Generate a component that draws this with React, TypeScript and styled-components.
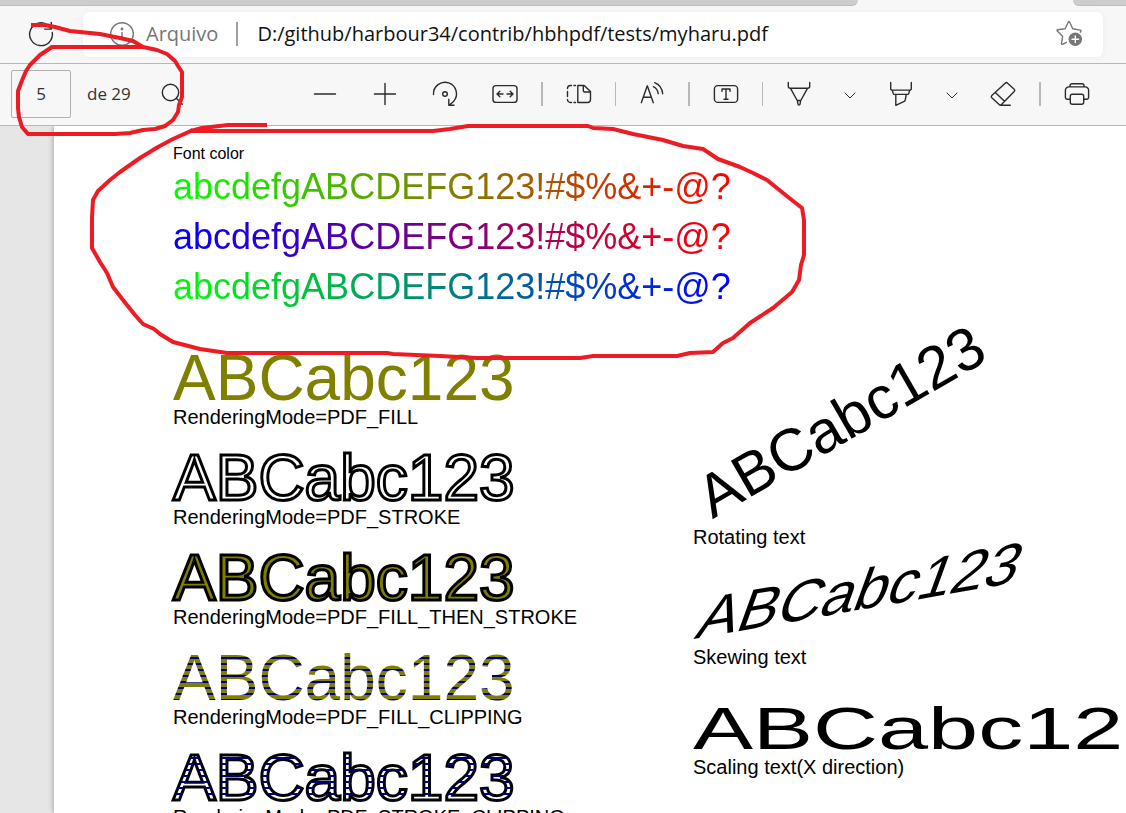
import React from "react";
import styled, { createGlobalStyle, css } from "styled-components";

const ui = `"Open Sans", "Noto Sans", sans-serif`;
const helvetica = `"Liberation Sans", Arial, sans-serif`;

const GlobalStyle = createGlobalStyle`
  *, *::before, *::after { box-sizing: border-box; }
  body { margin: 0; background: #e6e6e6; font-family: ${ui}; }
`;

const Window = styled.div`
  position: relative;
  display: flex;
  flex-direction: column;
  height: 100vh;
  overflow: hidden;
`;

/* ---------- browser chrome ---------- */

const TabStrip = styled.div`
  display: flex;
  height: 6px;
  flex: none;
  background: #f7f7f7;
`;

const TabEdge = styled.div<{ $side: "left" | "right" }>`
  background: #cdcdcd;
  border-bottom: 1px solid #bdbdbd;
  ${(p) =>
    p.$side === "left"
      ? css`
          flex: 1;
          border-bottom-right-radius: 6px;
          margin-right: 215px;
        `
      : css`
          width: 53px;
          border-bottom-left-radius: 6px;
        `}
`;

const AddressRow = styled.header`
  display: flex;
  align-items: center;
  flex: none;
  height: 58px;
  padding: 0 23px 1px 29px;
  gap: 30px;
  background: #f7f7f7;
  border-bottom: 1px solid #b8b8b8;
`;

const PlainButton = styled.button`
  display: flex;
  align-items: center;
  justify-content: center;
  padding: 0;
  border: 0;
  background: none;
  color: #2b2b2b;
`;

const FavoriteButton = styled(PlainButton)`
  color: #767676;
`;

const AddressBar = styled.div`
  display: flex;
  align-items: center;
  flex: 1;
  min-width: 0;
  height: 45px;
  padding: 0 19px 0 27px;
  border-radius: 6px;
  background: #fff;
  box-shadow: 0 0 6px rgba(0, 0, 0, 0.05);
  color: #767676;
`;

const Scheme = styled.span`
  margin-left: 12px;
  font-size: 20px;
  line-height: 28px;
`;

const SchemeRule = styled.span`
  width: 2px;
  height: 24px;
  margin: 0 19px 0 18px;
  background: #a0a0a0;
`;

const AddressInput = styled.input`
  flex: 1;
  min-width: 0;
  padding: 0;
  border: 0;
  outline: 0;
  background: none;
  color: #111;
  font-family: ${ui};
  font-size: 20px;
  line-height: 28px;
`;

/* ---------- PDF toolbar ---------- */

const Toolbar = styled.div`
  display: flex;
  align-items: center;
  flex: none;
  height: 62px;
  padding: 0 19px 2px 11px;
  background: #f7f7f7;
  border-bottom: 1px solid #b8b8b8;
`;

const PageField = styled.label`
  display: flex;
  align-items: center;
  gap: 16px;
  color: #333;
  font-size: 17px;
  line-height: 24px;
`;

const PageInput = styled.input`
  width: 60px;
  height: 48px;
  padding: 0;
  border: 1px solid #b0b0b0;
  border-radius: 2px;
  background: #f7f7f7;
  color: #333;
  text-align: center;
  font-family: ${ui};
  font-size: 17px;
`;

const SearchButton = styled(PlainButton)`
  margin-left: 29px;
`;

const Tools = styled.div`
  display: flex;
  align-items: center;
  margin-left: auto;
`;

const ToolButton = styled(PlainButton)<{ $narrow?: boolean }>`
  width: ${(p) => (p.$narrow ? 42 : 60)}px;
  height: 48px;
`;

const Divider = styled.span<{ $thin?: boolean }>`
  width: ${(p) => (p.$thin ? 1 : 2)}px;
  height: 24px;
  margin: 0 6px;
  background: #b8b8b8;
`;

const Stroke = styled.svg<{ $size?: number }>`
  display: block;
  width: ${(p) => p.$size ?? 24}px;
  height: ${(p) => p.$size ?? 24}px;
  overflow: visible;
  fill: none;
  stroke: currentColor;
  stroke-width: 1.4;
  stroke-linecap: round;
  stroke-linejoin: round;
`;

/* ---------- document ---------- */

const Viewer = styled.main`
  display: flex;
  flex: 1;
  min-height: 0;
  padding-left: 54px;
  overflow: hidden;
  background: #e6e6e6;
`;

const Sheet = styled.article`
  display: flex;
  flex: 1;
  min-width: 0;
  padding-left: 119px;
  background: #fff;
  box-shadow: 0 0 6px rgba(0, 0, 0, 0.35);
  color: #000;
  font-family: ${helvetica};
  font-kerning: none;
  white-space: nowrap;
`;

const ModesColumn = styled.section`
  flex: none;
  width: 520px;
  padding-top: 20px;
`;

const EffectsColumn = styled.section`
  flex: 1;
  min-width: 0;
  padding-top: 345px;
`;

const SmallCaption = styled.p`
  margin: 0;
  font-size: 16px;
  line-height: 16px;
`;

const ColorRow = styled.p<{ $from: string; $to: string }>`
  width: max-content;
  margin: 0;
  font-size: 36px;
  line-height: 50px;
  color: transparent;
  background: linear-gradient(to right, ${(p) => p.$from}, ${(p) => p.$to});
  background-clip: text;
  -webkit-background-clip: text;
`;

const Samples = styled.div`
  display: flex;
  flex-direction: column;
  gap: 22px;
  padding-top: 37px;
`;

const Figure = styled.figure`
  margin: 0;
`;

const Caption = styled.figcaption`
  font-size: 20px;
  line-height: 20px;
`;

const stripes = (base: string) =>
  `repeating-linear-gradient(to bottom, ${base} 0 2px, #000080 2px 4px, ${base} 4px 6px)`;

type Mode = "fill" | "stroke" | "fillStroke" | "fillClip" | "strokeClip";

const modeStyles = {
  fill: css`
    color: #808000;
  `,
  stroke: css`
    color: #fff;
    -webkit-text-stroke: 3px #000;
  `,
  fillStroke: css`
    color: #808000;
    -webkit-text-stroke: 3px #000;
  `,
  fillClip: css`
    color: transparent;
    background: ${stripes("#808000")};
    background-clip: text;
    -webkit-background-clip: text;
  `,
  strokeClip: css`
    position: relative;
    color: #fff;
    -webkit-text-stroke: 3px #000;
    &::after {
      content: attr(data-sample);
      position: absolute;
      inset: 0;
      color: transparent;
      -webkit-text-stroke: 0;
      background: ${stripes("transparent")};
      background-clip: text;
      -webkit-background-clip: text;
    }
  `,
};

const ModeSample = styled.div<{ $mode: Mode }>`
  width: max-content;
  font-size: 64px;
  line-height: 58px;
  ${(p) => modeStyles[p.$mode]}
`;

const EffectFigure = styled(Figure)<{ $gap: number }>`
  margin-bottom: ${(p) => p.$gap}px;
`;

const EffectSample = styled.div<{ $effect: string; $indent: number }>`
  width: max-content;
  margin-left: ${(p) => p.$indent}px;
  font-size: 60px;
  line-height: 56px;
  transform: ${(p) => p.$effect};
  transform-origin: 0 49px;
`;

const Ink = styled.svg`
  position: absolute;
  top: 0;
  left: 0;
  width: 820px;
  height: 370px;
  fill: none;
  stroke: #ed1c24;
  stroke-width: 4;
  stroke-linejoin: round;
  stroke-linecap: square;
  pointer-events: none;
`;

/* ---------- icons ---------- */

const Reload = () => (
  <Stroke viewBox="0 0 24 24">
    <path d="M23.3 10.5A11.4 11.4 0 1 1 19 3.2L22.3 6.8M22.3.5v6.6h-6.6" />
  </Stroke>
);
const Info = () => (
  <Stroke viewBox="0 0 24 24">
    <circle cx="12" cy="12" r="11.3" />
    <path d="M12 10.5v7" />
    <circle cx="12" cy="7" r=".7" fill="currentColor" />
  </Stroke>
);
const StarAdd = () => (
  <Stroke viewBox="0 0 28 28" $size={28}>
    <path d="M24.3 12.3l.6-1.200c.3-.5 0-.9-.5-1l-7.700-1.400L13.600 2c-.3-.6-1-.6-1.300 0L9.200 8.700l-7.500 1.100c-.7.1-.9.800-.4 1.300l5.300 5.200-1.100 7.200c-.1.700.5 1.100 1 .8l3.800-2" />
    <circle cx="19.3" cy="19.3" r="6.7" fill="currentColor" stroke="none" />
    <path d="M19.3 16v6.6M16 19.3h6.6" stroke="#fff" />
  </Stroke>
);
const Search = () => (
  <Stroke viewBox="0 0 24 24">
    <circle cx="10.5" cy="10.5" r="8.2" />
    <path d="M16.3 16.3l6 6" />
  </Stroke>
);
const Minus = () => (
  <Stroke viewBox="0 0 24 24">
    <path d="M1.5 12h21" />
  </Stroke>
);
const Plus = () => (
  <Stroke viewBox="0 0 24 24">
    <path d="M1.5 12h21M12 1.5v21" />
  </Stroke>
);
const Rotate = () => (
  <Stroke viewBox="0 0 24 24">
    <path d="M.5 12.5a11.5 11.5 0 1 1 20 7L16.500 23M15.800 17.300V23.300H21" />
    <circle cx="12" cy="12" r="2.3" />
  </Stroke>
);
const FitWidth = () => (
  <Stroke viewBox="0 0 24 24">
    <rect x="0" y="3.6" width="24" height="16.8" rx="3" />
    <path d="M4 12h6M6.800 9.200L4 12l2.800 2.800M20 12h-6M17.200 9.200L20 12l-2.800 2.800" />
  </Stroke>
);
const PageView = () => (
  <Stroke viewBox="0 0 24 24">
    <path d="M8.500 3.500H7M4.500 3.500H3.500a3 3 0 0 0-3 3M.5 9.500v5M.5 17.500a3 3 0 0 0 3 3h1M7 20.500h1.500" />
    <path d="M10.800 3.500h6.400l6.300 6v8a3 3 0 0 1-3 3h-9.700zM16.300 3.800v4.700a1.500 1.500 0 0 0 1.500 1.500h5.500" />
  </Stroke>
);
const ReadAloud = () => (
  <Stroke viewBox="0 0 24 24">
    <path d="M1.300 20.700L7.300 3.800l6 16.900M3.300 15.300h8" />
    <path d="M13.300 4.700c2.700 1.300 4.500 3.800 4.900 7M14.700.7c4.500 1.800 7.500 6 8 11" />
  </Stroke>
);
const TextBox = () => (
  <Stroke viewBox="0 0 24 24">
    <rect x=".4" y="3.6" width="23.2" height="16.8" rx="3.5" />
    <path d="M8 9.200V7h8v2.200M12 7v10.200M10 17.200h4" />
  </Stroke>
);
const Pen = () => (
  <Stroke viewBox="0 0 24 24">
    <path d="M1.300.5v3.800A2 2 0 0 0 3.300 6.300h17.400a2 2 0 0 0 2-2V.5M3.800 6.800l6.400 11.700h3.600l6.400-11.700M10.400 18.700l.5 3.200c.2 1.600 2 1.600 2.200 0l.5-3.200" />
  </Stroke>
);
const Highlighter = () => (
  <Stroke viewBox="0 0 24 24">
    <path d="M1.700.5v6.800l1 .8h18.600l1-.8V.5M3.300 8.300l1 3.300a1 1 0 0 0 1 .8h13.400a1 1 0 0 0 1-.8l1-3.300M6.800 12.500v10.800l8.400-3.900c.6-.3.900-.7 1-1.300l1.100-5.600" />
  </Stroke>
);
const Eraser = () => (
  <Stroke viewBox="0 0 24 24">
    <path d="M14.200 1.200a1.700 1.700 0 0 1 2.400 0l6.600 6a1.700 1.700 0 0 1 0 2.400L10.500 22.500a1.700 1.700 0 0 1-2.400 0L.8 15.800a1.700 1.700 0 0 1 0-2.400zM4.300 10.500l9.200 8.800M9.500 23.300h9.800" />
  </Stroke>
);
const Printer = () => (
  <Stroke viewBox="0 0 24 24">
    <path d="M5.300 17.300H2.500A2 2 0 0 1 .4 15.200V8.300a3.300 3.300 0 0 1 3.300-3.400h16.600a3.300 3.300 0 0 1 3.300 3.400v6.900a2 2 0 0 1-2.100 2.100h-2.800M5 4.700v-1a2 2 0 0 1 2-2h10a2 2 0 0 1 2 2v1" />
    <rect x="5.3" y="12.3" width="13.4" height="9.9" rx="2" />
  </Stroke>
);
const Chevron = () => (
  <Stroke viewBox="0 0 12 12" $size={12}>
    <path d="M1 5l5 5 5-5" strokeWidth="1" />
  </Stroke>
);

/* ---------- data ---------- */

const SAMPLE = "ABCabc123";
const COLOR_SAMPLE = "abcdefgABCDEFG123!#$%&+-@?";

const colorRows = [
  { from: "#00ff00", to: "#ff0000" },
  { from: "#0000ff", to: "#ff0000" },
  { from: "#00ff00", to: "#0000ff" },
];

const modes: { mode: Mode; caption: string }[] = [
  { mode: "fill", caption: "RenderingMode=PDF_FILL" },
  { mode: "stroke", caption: "RenderingMode=PDF_STROKE" },
  { mode: "fillStroke", caption: "RenderingMode=PDF_FILL_THEN_STROKE" },
  { mode: "fillClip", caption: "RenderingMode=PDF_FILL_CLIPPING" },
  { mode: "strokeClip", caption: "RenderingMode=PDF_STROKE_CLIPPING" },
];

const effects = [
  { effect: "rotate(-30deg)", indent: 20, gap: 44, caption: "Rotating text" },
  { effect: "skew(-20deg, -10deg)", indent: 0, gap: 34, caption: "Skewing text" },
  { effect: "scaleX(1.5)", indent: 0, gap: 78, caption: "Scaling text(X direction)" },
  { effect: "scaleY(2)", indent: 0, gap: 0, caption: "" },
];

export default function App() {
  return (
    <Window>
      <GlobalStyle />
      <TabStrip>
        <TabEdge $side="left" />
        <TabEdge $side="right" />
      </TabStrip>
      <AddressRow>
        <PlainButton aria-label="Atualizar">
          <Reload />
        </PlainButton>
        <AddressBar>
          <Info />
          <Scheme>Arquivo</Scheme>
          <SchemeRule />
          <AddressInput
            aria-label="Endereço"
            defaultValue="D:/github/harbour34/contrib/hbhpdf/tests/myharu.pdf"
          />
          <FavoriteButton aria-label="Favoritos">
            <StarAdd />
          </FavoriteButton>
        </AddressBar>
      </AddressRow>

      <Toolbar role="toolbar">
        <PageField>
          <PageInput defaultValue="5" />
          <span>de 29</span>
        </PageField>
        <SearchButton aria-label="Localizar">
          <Search />
        </SearchButton>
        <Tools>
          <ToolButton aria-label="Reduzir"><Minus /></ToolButton>
          <ToolButton aria-label="Ampliar"><Plus /></ToolButton>
          <ToolButton aria-label="Girar"><Rotate /></ToolButton>
          <ToolButton aria-label="Ajustar à largura"><FitWidth /></ToolButton>
          <Divider />
          <ToolButton aria-label="Exibição de página"><PageView /></ToolButton>
          <Divider $thin />
          <ToolButton aria-label="Ler em voz alta"><ReadAloud /></ToolButton>
          <Divider />
          <ToolButton aria-label="Adicionar texto"><TextBox /></ToolButton>
          <Divider $thin />
          <ToolButton aria-label="Desenhar"><Pen /></ToolButton>
          <ToolButton $narrow aria-label="Opções de desenho"><Chevron /></ToolButton>
          <ToolButton aria-label="Realçar"><Highlighter /></ToolButton>
          <ToolButton $narrow aria-label="Opções de realce"><Chevron /></ToolButton>
          <ToolButton aria-label="Apagar"><Eraser /></ToolButton>
          <Divider />
          <ToolButton aria-label="Imprimir"><Printer /></ToolButton>
        </Tools>
      </Toolbar>

      <Viewer>
        <Sheet>
          <ModesColumn>
            <SmallCaption>Font color</SmallCaption>
            {colorRows.map((row) => (
              <ColorRow key={row.from + row.to} $from={row.from} $to={row.to}>
                {COLOR_SAMPLE}
              </ColorRow>
            ))}
            <Samples>
              {modes.map(({ mode, caption }) => (
                <Figure key={mode}>
                  <ModeSample $mode={mode} data-sample={SAMPLE}>
                    {SAMPLE}
                  </ModeSample>
                  <Caption>{caption}</Caption>
                </Figure>
              ))}
            </Samples>
          </ModesColumn>
          <EffectsColumn>
            {effects.map(({ effect, indent, gap, caption }) => (
              <EffectFigure key={effect} $gap={gap}>
                <EffectSample $effect={effect} $indent={indent}>
                  {SAMPLE}
                </EffectSample>
                {caption && <Caption>{caption}</Caption>}
              </EffectFigure>
            ))}
          </EffectsColumn>
        </Sheet>
      </Viewer>

      <Ink viewBox="0 0 820 370" aria-hidden="true">
        <path d="M33 25L45 25 55 27 70 31 100 34 120 38 133 41 143 47 157 50 167 54 175 61 178 66 182 72 182 97 179 105 178 112 173 120 165 126 155 129 143 130 130 133 115 134 28 134 22 127 19 117 18 108 18 91 21 83 26 71 30 65 40 55 52 47 140 47" />
        <path d="M265 125L228 125 202 128 191 131 433 131 450 129 468 126 588 126 593 128 613 129 633 134 663 140 683 146 703 149 718 159 740 167 753 173 767 180 788 197 802 208 804 220 804 255 801 265 799 280 792 292 773 308 750 323 733 338 723 343 713 352 690 353 677 356 593 356 580 358 477 358 440 356 393 354 387 353 290 353 227 353 200 349 173 342 160 334 154 329 143 324 135 315 123 300 113 287 107 273 100 262 92 248 92 217 93 200 98 191 110 180 120 172 140 158 158 147 173 139 191 131" />
      </Ink>
    </Window>
  );
}
